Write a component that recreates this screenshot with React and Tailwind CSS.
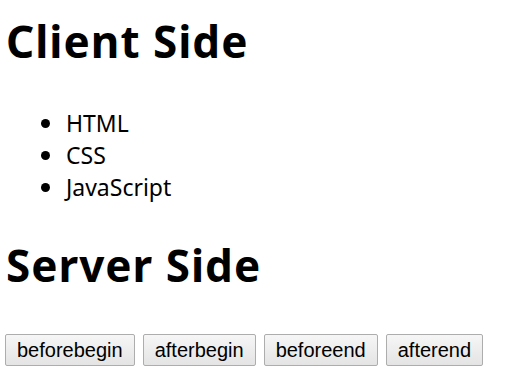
import React from "react"

const items = ["HTML", "CSS", "JavaScript"]
const positions = ["beforebegin", "afterbegin", "beforeend", "afterend"]

export default function App() {
  return (
    <div className="min-h-[379px] bg-white text-black px-[5px] font-['Noto_Sans',sans-serif]">
      <h1 className="pt-[13px] ml-[1px] text-[44px] leading-[56px] font-bold tracking-[1px]">Client Side</h1>

      <ul className="mt-[38px] pl-[36px]">
        {items.map((item) => (
          <li key={item} className="flex items-center h-[32px] text-[23px] leading-[32px]">
            <span className="w-[9px] h-[9px] rounded-full bg-black mr-[16px]" />
            {item}
          </li>
        ))}
      </ul>

      <h2 className="mt-[34px] ml-[1px] text-[44px] leading-[56px] font-bold tracking-[1px]">Server Side</h2>

      {/* insertAdjacentHTML demo buttons */}
      <div className="mt-[41px] flex gap-[8px]">
        {positions.map((p) => (
          <button
            key={p}
            className="h-[32px] px-[11px] border border-[#adadad] rounded-[2px] bg-gradient-to-b from-[#f6f6f6] to-[#e4e4e4] text-[20px] leading-none font-['Liberation_Sans',Arial,sans-serif]"
          >
            {p}
          </button>
        ))}
      </div>
    </div>
  )
}
